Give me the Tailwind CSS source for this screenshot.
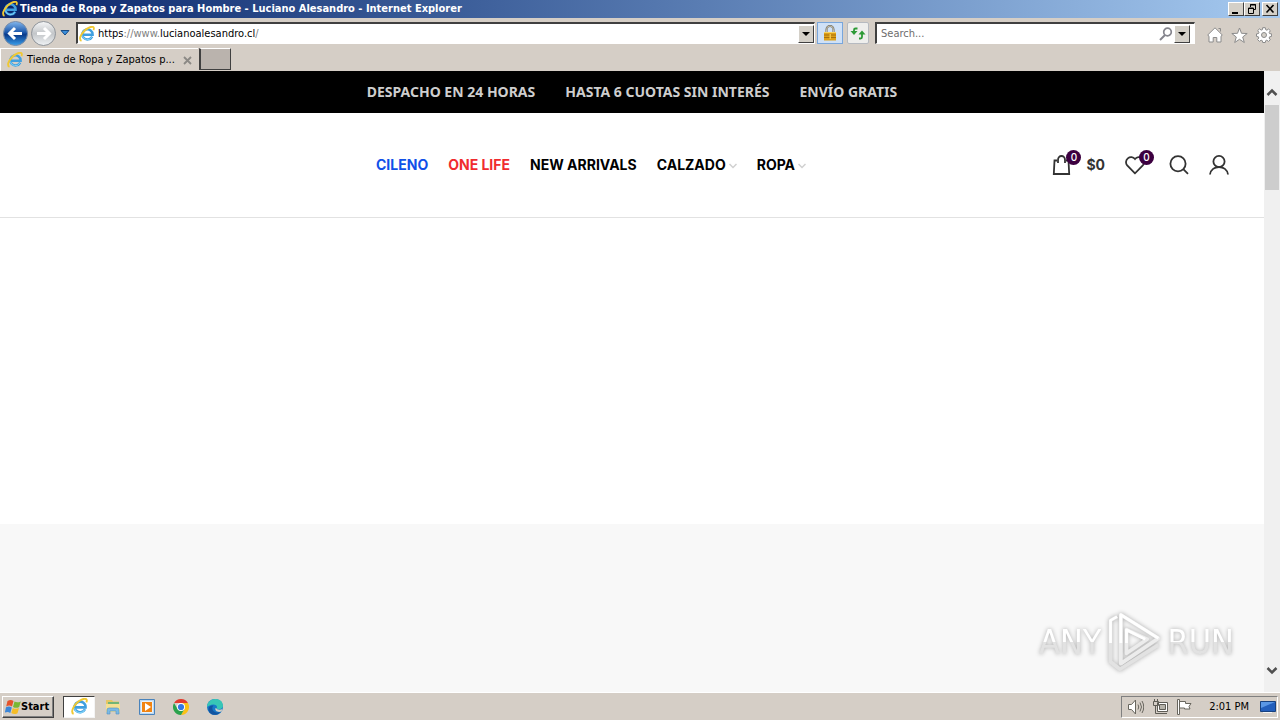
<!DOCTYPE html>
<html lang="es">
<head>
    <meta charset="UTF-8">
    <meta name="viewport" content="width=device-width, initial-scale=1.0">
    <title>Tienda de Ropa y Zapatos para Hombre - Luciano Alesandro</title>
    <script src="https://cdn.jsdelivr.net/npm/@tailwindcss/browser@4"></script>
</head>
<body class="h-screen flex flex-col overflow-hidden bg-[#d5cec6] text-black text-[11px] leading-[14px] font-['DejaVu_Sans_Condensed','Noto_Sans',sans-serif]">
    <!-- Shared icons -->
    <svg class="hidden">
        <symbol id="ie" viewBox="0 0 16 16">
            <path d="M13.200 10.600A5.200 5 0 1 1 13.700 8.800H4" fill="none" stroke="#3f9fdf" stroke-width="2.400"/>
            <path d="M12.800 11A5 5 0 0 1 3.400 9.500" fill="none" stroke="#80d2f8" stroke-width="1"/>
            <path d="M2.500 14.800C-1.500 13.500 3.500 4.500 10 1.600c4-1.800 5.800-.6 4.400 2.600" fill="none" stroke="#f0c832" stroke-width="1.800"/>
        </symbol>
        <symbol id="down" viewBox="0 0 8 8">
            <path d="M0 2h8L4 6z"/>
        </symbol>
        <symbol id="chevron" viewBox="0 0 8 6">
            <path d="M.500 1L4 4.500 7.500 1" fill="none" stroke="currentColor" stroke-width="1.500"/>
        </symbol>
    </svg>

    <!-- Title bar -->
    <header class="h-[18px] shrink-0 flex items-center pl-[2px] pr-[2px] bg-linear-to-r from-[#0a246a] to-[#a6caf0] text-white font-bold">
        <svg class="size-4 mr-[2px]"><use href="#ie"/></svg>
        <h1 class="flex-1 whitespace-nowrap">Tienda de Ropa y Zapatos para Hombre - Luciano Alesandro - Internet Explorer</h1>
        <div class="flex text-black">
            <button aria-label="Minimize" class="w-4 h-[14px] bg-[#d4d0c8] border border-t-white border-l-white border-r-[#404040] border-b-[#404040]">
                <svg class="w-full h-full" viewBox="0 0 14 12"><path d="M3 9h6v2H3z"/></svg>
            </button>
            <button aria-label="Restore" class="w-4 h-[14px] bg-[#d4d0c8] border border-t-white border-l-white border-r-[#404040] border-b-[#404040]">
                <svg class="w-full h-full" viewBox="0 0 14 12"><path d="M5.500 4V1.500h5v5H9M5 2h6M3.500 5v5.500h5V5zM3 5.500h6" fill="none" stroke="#000"/></svg>
            </button>
            <button aria-label="Close" class="w-4 h-[14px] ml-[2px] bg-[#d4d0c8] border border-t-white border-l-white border-r-[#404040] border-b-[#404040]">
                <svg class="w-full h-full" viewBox="0 0 14 12"><path d="M3.500 2l7 7.500M10.500 2l-7 7.500" fill="none" stroke="#000" stroke-width="1.600"/></svg>
            </button>
        </div>
    </header>

    <!-- Address bar -->
    <div class="h-[30px] shrink-0 flex items-center pl-[2px] pr-2">
        <button aria-label="Back" class="shrink-0">
            <svg class="size-[27px]" viewBox="0 0 27 27">
                <defs><linearGradient id="blue" x2="0" y2="1"><stop stop-color="#83b8ee"/><stop offset=".45" stop-color="#1d58ab"/><stop offset=".55" stop-color="#0a3a8a"/><stop offset="1" stop-color="#3aa0ec"/></linearGradient></defs>
                <circle cx="13.500" cy="13.500" r="12" fill="url(#blue)" stroke="#7a8da8"/>
                <path d="M20 13.500H8M13 8l-5.500 5.500L13 19" fill="none" stroke="#fff" stroke-width="3"/>
            </svg>
        </button>
        <button aria-label="Forward" class="shrink-0 ml-[1px]">
            <svg class="size-[27px]" viewBox="0 0 27 27">
                <defs><linearGradient id="grey" x2="0" y2="1"><stop stop-color="#f6f7f8"/><stop offset=".5" stop-color="#c3c6c9"/><stop offset="1" stop-color="#f0f3f5"/></linearGradient></defs>
                <circle cx="13.500" cy="13.500" r="12" fill="url(#grey)" stroke="#8e9399"/>
                <path d="M7 13.500h12M14 8l5.500 5.500L14 19" fill="none" stroke="#fff" stroke-width="3"/>
            </svg>
        </button>
        <button aria-label="Recent pages" class="shrink-0 ml-[3px]">
            <svg class="w-[10px] h-2" viewBox="0 0 10 8"><path d="M1 1.500h8L5 6z" fill="#3b8fdb" stroke="#164a84"/></svg>
        </button>
        <form class="flex-1 ml-[6px] h-[22px] flex items-center bg-white border border-t-2 border-l-2 border-t-[#404040] border-l-[#404040] border-r-white border-b-white">
            <svg class="size-4 mx-[1px] shrink-0"><use href="#ie"/></svg>
            <div class="relative flex-1">
                <input aria-label="Address" class="w-full px-[2px] outline-none text-transparent" value="https://www.lucianoalesandro.cl/">
                <span class="absolute left-[2px] top-0 pointer-events-none text-[#808080]" aria-hidden="true"><span class="text-black">https</span>://www.<span class="text-black">lucianoalesandro.cl</span>/</span>
            </div>
            <button type="button" aria-label="Show address list" class="w-4 h-[18px] flex items-center justify-center bg-[#d4d0c8] border border-t-white border-l-white border-r-[#404040] border-b-[#404040]"><svg class="size-2"><use href="#down"/></svg></button>
        </form>
        <button aria-label="Security report" class="shrink-0 ml-[2px] w-[26px] h-[22px] flex items-center justify-center bg-[#cfe1f7] border border-[#78a6dc]">
            <svg class="size-4" viewBox="0 0 16 16"><path d="M4.500 8V4.500a3.500 3.500 0 0 1 7 0V8" fill="none" stroke="#6f6a5c" stroke-width="2"/><path d="M4.500 8V4.500a3.500 3.500 0 0 1 7 0V8" fill="none" stroke="#d8d2bd" stroke-width=".8"/><path d="M2 7h12v8.500H2z" fill="#dda019"/><path d="M2 7h12v1H2z" fill="#f9d462"/><path d="M2 10h12M2 12.500h12" stroke="#a8710d"/><path d="M7.500 9h1.500v5H7.500z" fill="#f3c549"/></svg>
        </button>
        <button aria-label="Refresh" class="shrink-0 ml-1 w-[22px] h-[22px] flex items-center justify-center rounded-xs bg-[#eeeeec] border border-[#b6bac0]">
            <svg class="size-4" viewBox="0 0 16 16"><path d="M7.500 3.500H5.500A1.500 1.500 0 0 0 4 5v2M9 13.500h1.500A1.500 1.500 0 0 0 12 12V9" fill="none" stroke="#2c9a35" stroke-width="1.800"/><path d="M.500 6h7L4 10zM8.500 9.500h7L12 5.500z" fill="#2c9a35"/></svg>
        </button>
        <form class="ml-[6px] w-[320px] shrink-0 h-[22px] flex items-center bg-white border border-t-2 border-l-2 border-t-[#404040] border-l-[#404040] border-r-white border-b-white">
            <input aria-label="Search" placeholder="Search..." class="flex-1 min-w-0 pl-1 outline-none placeholder:text-[#6d6d6d]">
            <button type="button" aria-label="Go" class="mr-[1px]"><svg class="size-[14px]" viewBox="0 0 14 14"><circle cx="8.500" cy="5" r="3.800" fill="none" stroke="#85858d" stroke-width="1.700"/><path d="M6 8l-5 5" stroke="#85858d" stroke-width="2"/></svg></button>
            <button type="button" aria-label="Search options" class="w-4 h-[18px] mr-1 flex items-center justify-center bg-[#d4d0c8] border border-t-white border-l-white border-r-[#404040] border-b-[#404040]"><svg class="size-2"><use href="#down"/></svg></button>
        </form>
        <div class="ml-3 mt-1 flex gap-2">
            <button aria-label="Home"><svg class="size-4" viewBox="0 0 16 16"><path d="M8 .800l7.300 7.200-1.300 1.200V15H9.800v-4.500H6.200V15H2V9.200L.700 8z" fill="#fff" stroke="#8b8b8b"/><path d="M11.500 1.500h2v3" fill="none" stroke="#8b8b8b"/></svg></button>
            <button aria-label="Favorites"><svg class="size-[17px]" viewBox="0 0 17 17"><path d="M8.500 1l2 5.300 5.700.200-4.500 3.500 1.600 5.500-4.800-3.200-4.800 3.200L5.300 10 .800 6.500l5.700-.200z" fill="#fff" stroke="#8b8b8b"/></svg></button>
            <button aria-label="Tools"><svg class="size-4" viewBox="0 0 16 16"><path d="M6.700.700h2.600l.4 2 1.200.5 1.700-1.200 1.700 1.700-1.100 1.800.4 1.100 2 .300v2.500l-2 .4-.5 1.200 1.200 1.700-1.800 1.700-1.700-1.200-1.100.5-.4 1.800H6.700l-.4-1.800-1.200-.5-1.700 1.200-1.800-1.800L2.800 11l-.4-1.200-1.900-.4V6.900l2-.4.4-1.100-1.200-1.800 1.800-1.700 1.700 1.200 1.200-.4z" fill="#fff" stroke="#8b8b8b"/><circle cx="8" cy="8" r="2.500" fill="#d4d0c8" stroke="#8b8b8b"/></svg></button>
        </div>
    </div>

    <!-- Tabs -->
    <div class="h-[23px] shrink-0 flex">
        <div class="w-[198px] flex items-center pl-[6px] pr-[2px] border-t border-l border-white">
            <svg class="size-4 mr-1 shrink-0"><use href="#ie"/></svg>
            <span class="flex-1 whitespace-nowrap">Tienda de Ropa y Zapatos p...</span>
            <button aria-label="Close tab" class="mr-1"><svg class="size-[9px]" viewBox="0 0 9 9"><path d="M1 1l7 7M8 1L1 8" stroke="#8b8985" stroke-width="1.800"/></svg></button>
        </div>
        <button aria-label="New tab" class="ml-[1px] w-8 h-[22px] bg-[#bab3ad] border border-l-2 border-t-white border-l-[#404040] border-r-[#404040] border-b-[#404040]"></button>
    </div>

    <div class="flex-1 min-h-0 flex">
        <!-- Page -->
        <div class="flex-1 flex flex-col bg-white">
            <div class="h-[42px] flex items-center justify-center gap-[30px] bg-black text-[#cecece] text-[14px] font-bold font-['Noto_Sans',sans-serif]">
                <span>DESPACHO EN 24 HORAS</span>
                <span>HASTA 6 CUOTAS SIN INTERÉS</span>
                <span>ENVÍO GRATIS</span>
            </div>
            <div class="h-[105px] flex items-center pl-[376px] pr-[35px] border-b border-[#e2e2e2] text-[14px] font-bold font-['Inter',sans-serif]">
                <nav class="flex-1 flex gap-5 whitespace-nowrap">
                    <a href="#" class="text-[#1150e8]">CILENO</a>
                    <a href="#" class="text-[#f02b2f]">ONE LIFE</a>
                    <a href="#">NEW ARRIVALS</a>
                    <a href="#" class="flex items-center gap-[3px]">CALZADO<svg class="w-2 h-[6px] mt-[2px] text-[#d0d0d0]"><use href="#chevron"/></svg></a>
                    <a href="#" class="flex items-center gap-[3px]">ROPA<svg class="w-2 h-[6px] mt-[2px] text-[#d0d0d0]"><use href="#chevron"/></svg></a>
                </nav>
                <div class="flex items-center gap-5 text-[#333]">
                    <a href="#" aria-label="Carrito" class="flex items-center gap-[14px]">
                        <span class="relative">
                            <svg class="size-5" viewBox="0 0 20 20" fill="none" stroke="currentColor" stroke-width="1.800"><path d="M5 5.500H2.500L1.800 19h15.400L16.500 5.500H14M6 8V5a3.500 4 0 0 1 7 0v3"/></svg>
                            <span class="absolute left-[14px] -top-[5px] size-[15px] rounded-full bg-[#3c0040] text-white text-[10px] leading-[15px] font-medium text-center">0</span>
                        </span>
                        $0
                    </a>
                    <a href="#" aria-label="Favoritos" class="relative mr-1">
                        <svg class="size-5" viewBox="0 0 20 20" fill="none" stroke="currentColor" stroke-width="1.800"><path d="M10 18.300L2.200 10.500A4.700 4.700 0 0 1 10 4a4.700 4.700 0 0 1 7.800 6.500z"/></svg>
                        <span class="absolute left-[14px] -top-[5px] size-[15px] rounded-full bg-[#3c0040] text-white text-[10px] leading-[15px] font-medium text-center">0</span>
                    </a>
                    <a href="#" aria-label="Buscar"><svg class="size-5" viewBox="0 0 20 20" fill="none" stroke="currentColor" stroke-width="1.800"><circle cx="9" cy="8.800" r="7.600"/><path d="M14.500 14.300l4.500 4.500"/></svg></a>
                    <a href="#" aria-label="Mi cuenta"><svg class="size-5" viewBox="0 0 20 20" fill="none" stroke="currentColor" stroke-width="1.800"><circle cx="10" cy="6.500" r="5.600"/><path d="M1 19.500c1-10 17-10 18 0"/></svg></a>
                </div>
            </div>
            <div class="h-[306px]"></div>
            <div class="flex-1 relative bg-[#f8f8f8]">
                <!-- Watermark -->
                <div class="absolute right-[30px] bottom-[19px] flex items-center gap-1 text-[34px] leading-[44px] drop-shadow-[0_0_2px_#aaa]">
                    <span class="bg-linear-to-b from-white from-50% to-[#e2e2e2] to-50% bg-clip-text text-transparent">ANY</span>
                    <svg class="w-[58px] h-[62px]" viewBox="0 0 58 66" fill="none" stroke-linejoin="round">
                        <path d="M11 6L4 10v44l10 8 41-26" stroke="#e2e2e2" stroke-width="4"/>
                        <path d="M15 4l40 25-40 27zM21 20v25l22-15z" stroke="#ececec" stroke-width="4"/>
                        <path d="M4 34V10l7-4M15 34V4l40 25M21 34V20l20 10" stroke="#fff" stroke-width="3"/>
                    </svg>
                    <span class="bg-linear-to-b from-white from-50% to-[#e2e2e2] to-50% bg-clip-text text-transparent">RUN</span>
                </div>
            </div>
        </div>
        <!-- Scrollbar -->
        <div class="w-4 flex flex-col items-center bg-[#f0f0f0] text-[#505050]">
            <svg class="w-3 h-[34px] pt-[10px]" viewBox="0 0 12 24" fill="none" stroke="currentColor" stroke-width="2.500"><path d="M1.500 14L6 9.500l4.500 4.500"/></svg>
            <div class="w-[14px] h-[85px] bg-[#cdcdcd]"></div>
            <svg class="mt-auto w-3 h-11" viewBox="0 0 12 44" fill="none" stroke="currentColor" stroke-width="2.500"><path d="M1.500 20L6 24.500l4.500-4.500"/></svg>
        </div>
    </div>

    <!-- Taskbar -->
    <footer class="h-7 shrink-0 flex items-center pl-[2px] pr-[2px] border-t border-white">
        <button class="w-[52px] h-[22px] flex items-center pl-[2px] font-bold border border-t-white border-l-white border-r-[#404040] border-b-[#404040] shadow-[inset_-1px_-1px_#808080]">
            <svg class="size-4 shrink-0" viewBox="0 0 16 16"><path d="M2.500 2c2.500-1.500 4-1.300 6 0L7 7.600C5 6.300 3.500 6.300 1.200 7.500z" fill="#e5532b"/><path d="M9.500 2.600c2 1 3.800 1 6.300-.200L14.200 8c-2.300 1.200-4 1.100-6.200-.1z" fill="#79b833"/><path d="M1 8.300c2.300-1.200 4-1 5.800.1L5.300 14c-2-1.300-3.500-1.300-5.500-.3z" fill="#3b86d8"/><path d="M7.800 8.900c2.100 1.200 4 1.100 6.200.1l-1.500 5.200c-2.300 1.200-4 1.100-6.200-.1z" fill="#f5bd26"/></svg>
            Start
        </button>
        <button aria-label="Internet Explorer" class="ml-[9px] w-8 h-[22px] flex items-center justify-center bg-white border border-t-[#404040] border-l-[#404040] border-r-[#f4f4f4] border-b-[#f4f4f4]"><svg class="size-[17px]"><use href="#ie"/></svg></button>
        <div class="ml-[10px] flex gap-[18px]">
            <button aria-label="File Explorer"><svg class="size-4" viewBox="0 0 16 16"><path d="M1 1h6l1 1.500h6V13H1z" fill="#e6c765"/><path d="M3 3h11v4H3z" fill="#73b576"/><path d="M1 5h14v8H1z" fill="#f5e093"/><path d="M2 15v-4a2 2 0 0 1 2-2h8a2 2 0 0 1 2 2v4h-3v-3H5v3z" fill="#7cb9e4" stroke="#4d91c2" stroke-width=".6"/></svg></button>
            <button aria-label="Media Player"><svg class="size-4" viewBox="0 0 16 16"><path d="M.500.500h15v15H.500z" fill="#bcd8f1" stroke="#4a83bb"/><path d="M2.500 2.500h11v11h-11z" fill="#f18412" stroke="#e8f2fb"/><path d="M6 4l6 4-6 4z" fill="#fff"/></svg></button>
            <button aria-label="Chrome"><svg class="size-4" viewBox="0 0 16 16"><path d="M1.070 4A8 8 0 0 1 14.930 4H8z" fill="#e33b2e"/><path d="M14.930 4A8 8 0 0 1 8 16l3.460-6L8 4z" fill="#fbc116"/><path d="M8 16A8 8 0 0 1 1.070 4l3.470 6L11.460 10z" fill="#2ba24c"/><circle cx="8" cy="8" r="4" fill="#fff"/><circle cx="8" cy="8" r="3.100" fill="#3478e5"/></svg></button>
            <button aria-label="Edge"><svg class="size-4" viewBox="0 0 16 16"><circle cx="8" cy="8" r="8" fill="#1778c8"/><path d="M0 8C.500-2.500 16-2.500 16 7c0 3-4 4-6.500 2.500 1.500-2-.5-4-3-4C3.500 5.500 1 7 0 8z" fill="#37c6b6"/><path d="M5.500 8c-1 4 3 6.500 8 5-4 5-12 3-12-3 0-3 3-4 5-3.500z" fill="#1254a0"/><path d="M9.500 9.500c1 1.500 4 1.500 6 .5l-1 2.500c-4 1.500-7-1-6-3.500z" fill="#d4d0c8"/></svg></button>
        </div>
        <div class="ml-auto h-[22px] flex items-center pl-[6px] pr-[1px] border border-t-[#808080] border-l-[#808080] border-r-white border-b-white">
            <div class="flex gap-2">
                <svg class="size-4" viewBox="0 0 16 16" fill="none" stroke="#68665e"><path d="M.500 5.500h3L7.500 1v14l-4-4.500h-3z" fill="#fff"/><path d="M10 5.500q1.500 2.500 0 5M12 3.500q3 4.500 0 9M14 2q3.500 6 0 12"/></svg>
                <svg class="size-4" viewBox="0 0 16 16" fill="none" stroke="#5e5c55"><path d="M5.500 3.500h10v9h-10z" fill="#fff"/><path d="M7.500 5.500h6v5h-6z" fill="#b5b2a9"/><path d="M7 14.500h8M3.500 6v8.500h4M1.500 2.500h5v4h-5zM2.500 0v2.500M5.500 0v2.500"/></svg>
                <svg class="size-4" viewBox="0 0 16 16" fill="#fff" stroke="#68665e"><path d="M1.500.500h2v15h-2zM3.500 2.500h6v2h5.500l-2 3 1 2.500H8.500V9h-5z"/></svg>
            </div>
            <time class="ml-[17px] mr-[11px] whitespace-nowrap">2:01 PM</time>
            <button aria-label="Show desktop"><svg class="size-4" viewBox="0 0 16 16"><path d="M.500 2.500h15v10H.500z" fill="#235fbc" stroke="#17417f"/><path d="M1 3h14L1 9z" fill="#5a97e5"/><path d="M3 13.500h9" stroke="#f4f4f4"/></svg></button>
        </div>
    </footer>
</body>
</html>
